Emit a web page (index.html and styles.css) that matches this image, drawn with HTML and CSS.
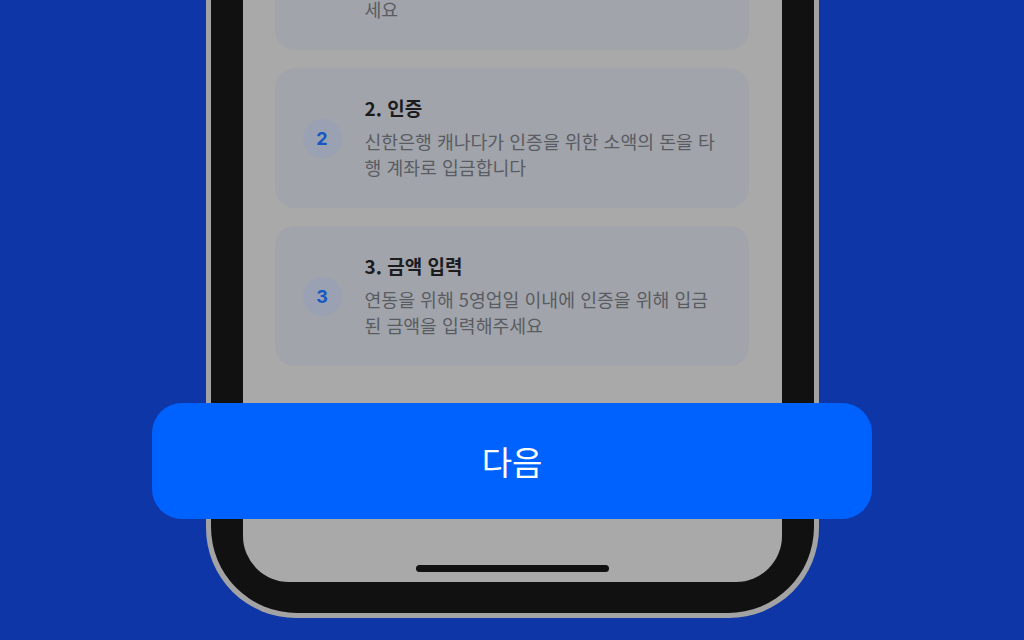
FILE: index.html
```html
<!DOCTYPE html>
<html lang="ko">
	<head>
		<meta charset="utf-8"/>
		<title>계좌 연동</title>
		<link rel="stylesheet" href="styles.css">
	</head>
	<body>
		<div class="phone">
			<div class="bezel">
				<div class="screen">
					<div class="steps">
						<div class="step">
							<div class="step-num">1</div>
							<div class="step-body">
								<div class="step-title">1. 계좌 정보 입력</div>
								<div class="step-desc">연동할 캐나다 은행의 계좌 정보를 입력해주<br>세요</div>
							</div>
						</div>
						<div class="step">
							<div class="step-num">2</div>
							<div class="step-body">
								<div class="step-title">2. 인증</div>
								<div class="step-desc">신한은행 캐나다가 인증을 위한 소액의 돈을 타행 계좌로 입금합니다</div>
							</div>
						</div>
						<div class="step">
							<div class="step-num">3</div>
							<div class="step-body">
								<div class="step-title">3. 금액 입력</div>
								<div class="step-desc">연동을 위해 5영업일 이내에 인증을 위해 입금된 금액을 입력해주세요</div>
							</div>
						</div>
					</div>
					<div class="home-bar"></div>
				</div>
			</div>
		</div>
		<button class="next-btn">다음</button>
	</body>
</html>
```

FILE: styles.css
```css
html, body {
	margin: 0;
	height: 640px;
	overflow: hidden;
}
body {
	position: relative;
	background: #0f36a6;
	display: flex;
	flex-direction: column;
	align-items: center;
	font-family: "Noto Sans CJK KR", "Noto Sans", sans-serif;
}

/* phone frame, top cut off by the window */
.phone {
	width: 613px;
	height: 740px;
	margin-top: -122px;
	box-sizing: border-box;
	padding: 0 5px 5px;
	background: #a3a3a3;
	border-radius: 0 0 90px 90px;
	flex-shrink: 0;
}
.bezel {
	height: 100%;
	box-sizing: border-box;
	padding: 0 32px 31px;
	background: #111;
	border-radius: 0 0 86px 86px;
}
.screen {
	height: 100%;
	background: #a9a9a9;
	border-radius: 0 0 46px 46px;
	display: flex;
	flex-direction: column;
}

.steps {
	display: flex;
	flex-direction: column;
	gap: 18px;
	padding: 32px 33px 0 32px;
}
.step {
	display: flex;
	align-items: center;
	gap: 23px;
	height: 140px;
	box-sizing: border-box;
	padding: 0 28px 0 28px;
	background: #a1a4aa;
	border-radius: 20px;
}
.step-num {
	width: 39px;
	height: 39px;
	flex-shrink: 0;
	border-radius: 50%;
	background: #99a1b3;
	color: #1557c4;
	font-family: Inter, "Noto Sans", sans-serif;
	font-weight: 700;
	font-size: 18px;
	display: flex;
	align-items: center;
	justify-content: center;
}
.step-body {
	flex: 1;
}
.step-title {
	font-size: 19px;
	line-height: 24px;
	font-weight: 700;
	color: #1c1c1e;
	margin-bottom: 8px;
}
.step-desc {
	font-size: 18.3px;
	line-height: 26px;
	color: #595c62;
	word-break: break-all;
}

.home-bar {
	width: 193px;
	height: 7px;
	margin: auto auto 10px;
	border-radius: 4px;
	background: #111;
}

/* bottom action, floats over the phone */
.next-btn {
	position: absolute;
	left: 152px;
	top: 403px;
	width: 720px;
	height: 116px;
	border: 0;
	border-radius: 30px;
	background: #0062fe;
	color: #fff;
	font-family: "Noto Sans CJK KR", "Noto Sans", sans-serif;
	font-size: 33px;
	padding: 0;
}
```
